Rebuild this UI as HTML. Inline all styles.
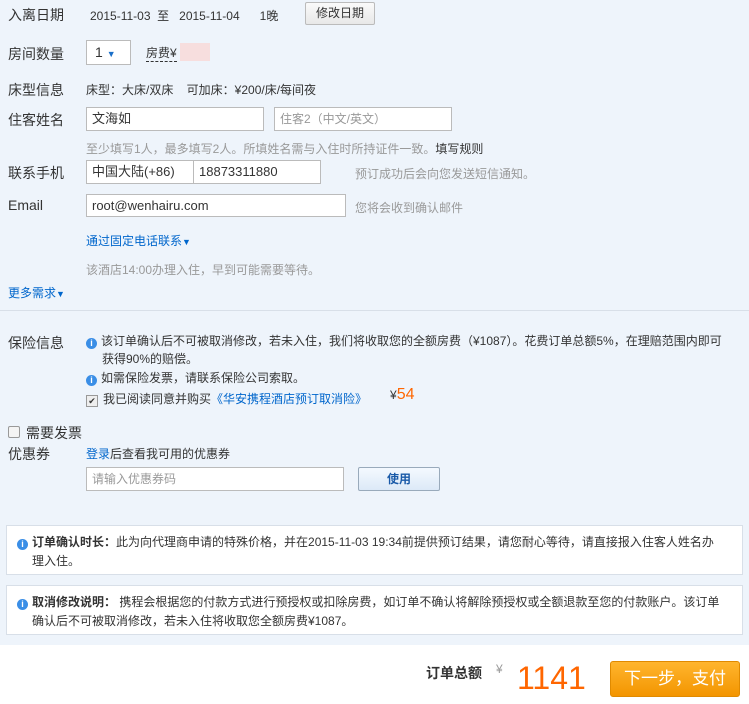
<!DOCTYPE html>
<html><head><meta charset="utf-8"><style>
body{margin:0;width:749px;height:704px;background:#fff;font-family:"Liberation Sans","Noto Sans CJK SC",sans-serif;font-size:12px;color:#333;position:relative;overflow:hidden}
.bg{position:absolute;left:0;top:0;width:749px;height:645px;background:#eef4fb}
.a{position:absolute;white-space:nowrap}
.l{font-size:14px;color:#333}
.g{color:#999}
.b{color:#06c}
.inp{position:absolute;background:#fff;border:1px solid #bbb;box-sizing:border-box;font-size:13px;padding-left:5px;line-height:22px}
.i{display:inline-block;width:11px;height:11px;border-radius:50%;background:#3a8ee6;color:#fff;font-size:9px;line-height:11px;text-align:center;font-weight:bold;vertical-align:-1px;margin-right:4px}
.box{position:absolute;left:6px;width:737px;background:#fff;border:1px solid #d8dfe8;box-sizing:border-box;padding:7px 10px 0 10px;line-height:19px;font-size:12px}
</style></head><body>
<div class="bg"></div>
<div class="a l" style="left:8px;top:5px">入离日期</div>
<div class="a" style="left:90px;top:7px">2015-11-03 &nbsp;至 &nbsp; 2015-11-04 &nbsp; &nbsp; &nbsp;1晚</div>
<div class="a" style="left:305px;top:2px;width:70px;height:23px;border:1px solid #bbb;border-radius:2px;background:linear-gradient(#fafafa,#e8e8e8);box-sizing:border-box;text-align:center;line-height:21px">修改日期</div>
<div class="a l" style="left:8px;top:44px">房间数量</div>
<div class="a" style="left:86px;top:40px;width:45px;height:25px;background:#fff;border:1px solid #bbb;box-sizing:border-box;font-size:14px;line-height:23px;padding-left:8px">1 <span style="color:#1a6fc9;font-size:9px">▼</span></div>
<div class="a" style="left:146px;top:44px;border-bottom:1px dashed #333;font-size:12px">房费¥</div>
<div class="a" style="left:180px;top:43px;width:30px;height:18px;background:#f7dede"></div>
<div class="a l" style="left:8px;top:80px">床型信息</div>
<div class="a" style="left:86px;top:81px">床型：大床/双床 &nbsp; &nbsp;可加床：¥200/床/每间夜</div>
<div class="a l" style="left:8px;top:110px">住客姓名</div>
<div class="inp" style="left:86px;top:107px;width:178px;height:24px">文海如</div>
<div class="inp g" style="left:274px;top:107px;width:178px;height:24px;font-size:12px">住客2（中文/英文）</div>
<div class="a g" style="left:86px;top:140px">至少填写1人，最多填写2人。所填姓名需与入住时所持证件一致。<span style="color:#333">填写规则</span></div>
<div class="a l" style="left:8px;top:163px">联系手机</div>
<div class="inp" style="left:86px;top:160px;width:235px;height:24px">中国大陆(+86)</div>
<div class="a" style="left:193px;top:161px;width:1px;height:22px;background:#bbb"></div>
<div class="a" style="left:199px;top:164px;font-size:13px">18873311880</div>
<div class="a g" style="left:355px;top:165px">预订成功后会向您发送短信通知。</div>
<div class="a l" style="left:8px;top:197px">Email</div>
<div class="inp" style="left:86px;top:194px;width:260px;height:23px;line-height:21px">root@wenhairu.com</div>
<div class="a g" style="left:355px;top:199px">您将会收到确认邮件</div>
<div class="a b" style="left:86px;top:232px">通过固定电话联系<span style="font-size:9px">▼</span></div>
<div class="a g" style="left:86px;top:261px">该酒店14:00办理入住，早到可能需要等待。</div>
<div class="a b" style="left:8px;top:284px">更多需求<span style="font-size:9px">▼</span></div>
<div class="a" style="left:0;top:310px;width:749px;height:1px;background:#d8dfe8"></div>
<div class="a l" style="left:8px;top:333px">保险信息</div>
<div class="a" style="left:86px;top:332px;line-height:18px"><span class="i">i</span>该订单确认后不可被取消修改，若未入住，我们将收取您的全额房费（¥1087）。花费订单总额5%，在理赔范围内即可<br><span style="margin-left:16px">获得90%的赔偿。</span></div>
<div class="a" style="left:86px;top:369px"><span class="i">i</span>如需保险发票，请联系保险公司索取。</div>
<div class="a" style="left:86px;top:390px"><span style="display:inline-block;width:10px;height:10px;border:1px solid #999;background:#eee;font-size:9px;line-height:10px;text-align:center;vertical-align:-1px;margin-right:5px">✔</span>我已阅读同意并购买<span class="b">《华安携程酒店预订取消险》</span></div>
<div class="a" style="left:390px;top:386px">¥<span style="color:#f60;font-size:16px">54</span></div>
<div class="a l" style="left:8px;top:423px"><span style="display:inline-block;width:10px;height:10px;border:1px solid #999;background:#f4f4f4;border-radius:2px;vertical-align:0;margin-right:6px"></span>需要发票</div>
<div class="a l" style="left:8px;top:444px">优惠券</div>
<div class="a" style="left:86px;top:445px"><span class="b">登录</span>后查看我可用的优惠券</div>
<div class="inp g" style="left:86px;top:467px;width:258px;height:24px;font-size:12px">请输入优惠券码</div>
<div class="a" style="left:358px;top:467px;width:82px;height:24px;border:1px solid #9ab;border-radius:2px;background:linear-gradient(#f4f9ff,#dce9f7);box-sizing:border-box;text-align:center;line-height:22px;color:#1a5aa8;font-weight:bold">使用</div>
<div class="box" style="top:525px;height:50px"><span class="i">i</span><b>订单确认时长：</b>此为向代理商申请的特殊价格，并在2015-11-03 19:34前提供预订结果，请您耐心等待，请直接报入住客人姓名办<br><span style="margin-left:15px">理入住。</span></div>
<div class="box" style="top:585px;height:50px"><span class="i">i</span><b>取消修改说明：</b> 携程会根据您的付款方式进行预授权或扣除房费，如订单不确认将解除预授权或全额退款至您的付款账户。该订单<br><span style="margin-left:15px">确认后不可被取消修改，若未入住将收取您全额房费¥1087。</span></div>
<div class="a" style="left:426px;top:663px;font-size:14px;font-weight:bold;color:#333">订单总额</div>
<div class="a g" style="left:496px;top:662px">¥</div>
<div class="a" style="left:517px;top:658px;font-size:32px;color:#f60;line-height:40px">1141</div>
<div class="a" style="left:610px;top:661px;width:130px;height:36px;background:linear-gradient(#ffb52e,#f39500);border:1px solid #e08a00;border-radius:3px;box-sizing:border-box;color:#fff;font-size:17px;text-align:center;line-height:34px">下一步，支付</div>
</body></html>
